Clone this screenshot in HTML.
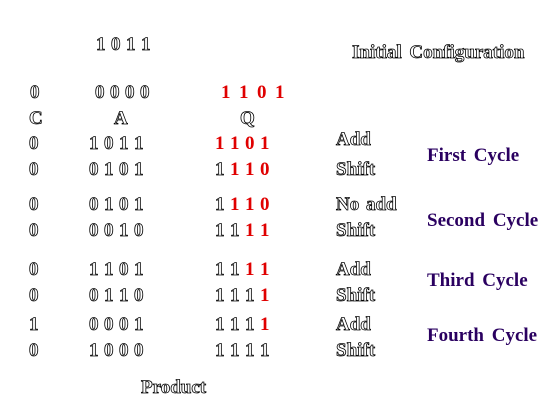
<!DOCTYPE html>
<html><head><style>
body{margin:0;width:559px;height:410px;background:#fff;position:relative;overflow:hidden;font-family:"Liberation Serif",serif;font-weight:bold;font-size:19px}
.t{position:absolute;line-height:19px;color:#fff;-webkit-text-stroke:0.8px #000;white-space:nowrap}
.t span{display:inline-block;width:15px}
.r{color:#e00000!important;-webkit-text-stroke:0 #000}
.c{position:absolute;color:#2a0060;font-size:19px;line-height:19px;white-space:nowrap;word-spacing:3px}
</style></head><body>
<div class="t" style="left:96px;top:35px"><span>1</span><span>0</span><span>1</span><span>1</span></div>
<div class="t" style="left:352px;top:43px;word-spacing:3px">Initial Configuration</div>

<div class="t" style="left:30px;top:83px">0</div>
<div class="t" style="left:95px;top:83px"><span>0</span><span>0</span><span>0</span><span>0</span></div>
<div class="t r" style="left:221px;top:83px"><span class="r" style="width:18px">1</span><span class="r" style="width:18px">1</span><span class="r" style="width:18px">0</span><span class="r">1</span></div>

<div class="t" style="left:29px;top:109px">C</div>
<div class="t" style="left:114px;top:109px">A</div>
<div class="t" style="left:240px;top:109px">Q</div>

<div class="t" style="left:29px;top:134px">0</div>
<div class="t" style="left:89px;top:134px"><span>1</span><span>0</span><span>1</span><span>1</span></div>
<div class="t" style="left:215px;top:134px"><span class="r">1</span><span class="r">1</span><span class="r">0</span><span class="r">1</span></div>
<div class="t" style="left:336px;top:130px">Add</div>

<div class="t" style="left:29px;top:160px">0</div>
<div class="t" style="left:89px;top:160px"><span>0</span><span>1</span><span>0</span><span>1</span></div>
<div class="t" style="left:215px;top:160px"><span>1</span><span class="r">1</span><span class="r">1</span><span class="r">0</span></div>
<div class="t" style="left:336px;top:160px">Shift</div>
<div class="c" style="left:427px;top:146px">First Cycle</div>

<div class="t" style="left:29px;top:195px">0</div>
<div class="t" style="left:89px;top:195px"><span>0</span><span>1</span><span>0</span><span>1</span></div>
<div class="t" style="left:215px;top:195px"><span>1</span><span class="r">1</span><span class="r">1</span><span class="r">0</span></div>
<div class="t" style="left:336px;top:195px;word-spacing:2px">No add</div>

<div class="t" style="left:29px;top:221px">0</div>
<div class="t" style="left:89px;top:221px"><span>0</span><span>0</span><span>1</span><span>0</span></div>
<div class="t" style="left:215px;top:221px"><span>1</span><span>1</span><span class="r">1</span><span class="r">1</span></div>
<div class="t" style="left:336px;top:221px">Shift</div>
<div class="c" style="left:427px;top:211px">Second Cycle</div>

<div class="t" style="left:29px;top:260px">0</div>
<div class="t" style="left:89px;top:260px"><span>1</span><span>1</span><span>0</span><span>1</span></div>
<div class="t" style="left:215px;top:260px"><span>1</span><span>1</span><span class="r">1</span><span class="r">1</span></div>
<div class="t" style="left:336px;top:260px">Add</div>

<div class="t" style="left:29px;top:286px">0</div>
<div class="t" style="left:89px;top:286px"><span>0</span><span>1</span><span>1</span><span>0</span></div>
<div class="t" style="left:215px;top:286px"><span>1</span><span>1</span><span>1</span><span class="r">1</span></div>
<div class="t" style="left:336px;top:286px">Shift</div>
<div class="c" style="left:427px;top:271px">Third Cycle</div>

<div class="t" style="left:29px;top:315px">1</div>
<div class="t" style="left:89px;top:315px"><span>0</span><span>0</span><span>0</span><span>1</span></div>
<div class="t" style="left:215px;top:315px"><span>1</span><span>1</span><span>1</span><span class="r">1</span></div>
<div class="t" style="left:336px;top:315px">Add</div>

<div class="t" style="left:29px;top:341px">0</div>
<div class="t" style="left:89px;top:341px"><span>1</span><span>0</span><span>0</span><span>0</span></div>
<div class="t" style="left:215px;top:341px"><span>1</span><span>1</span><span>1</span><span>1</span></div>
<div class="t" style="left:336px;top:341px">Shift</div>
<div class="c" style="left:427px;top:326px">Fourth Cycle</div>

<div class="t" style="left:141px;top:378px">Product</div>
</body></html>
